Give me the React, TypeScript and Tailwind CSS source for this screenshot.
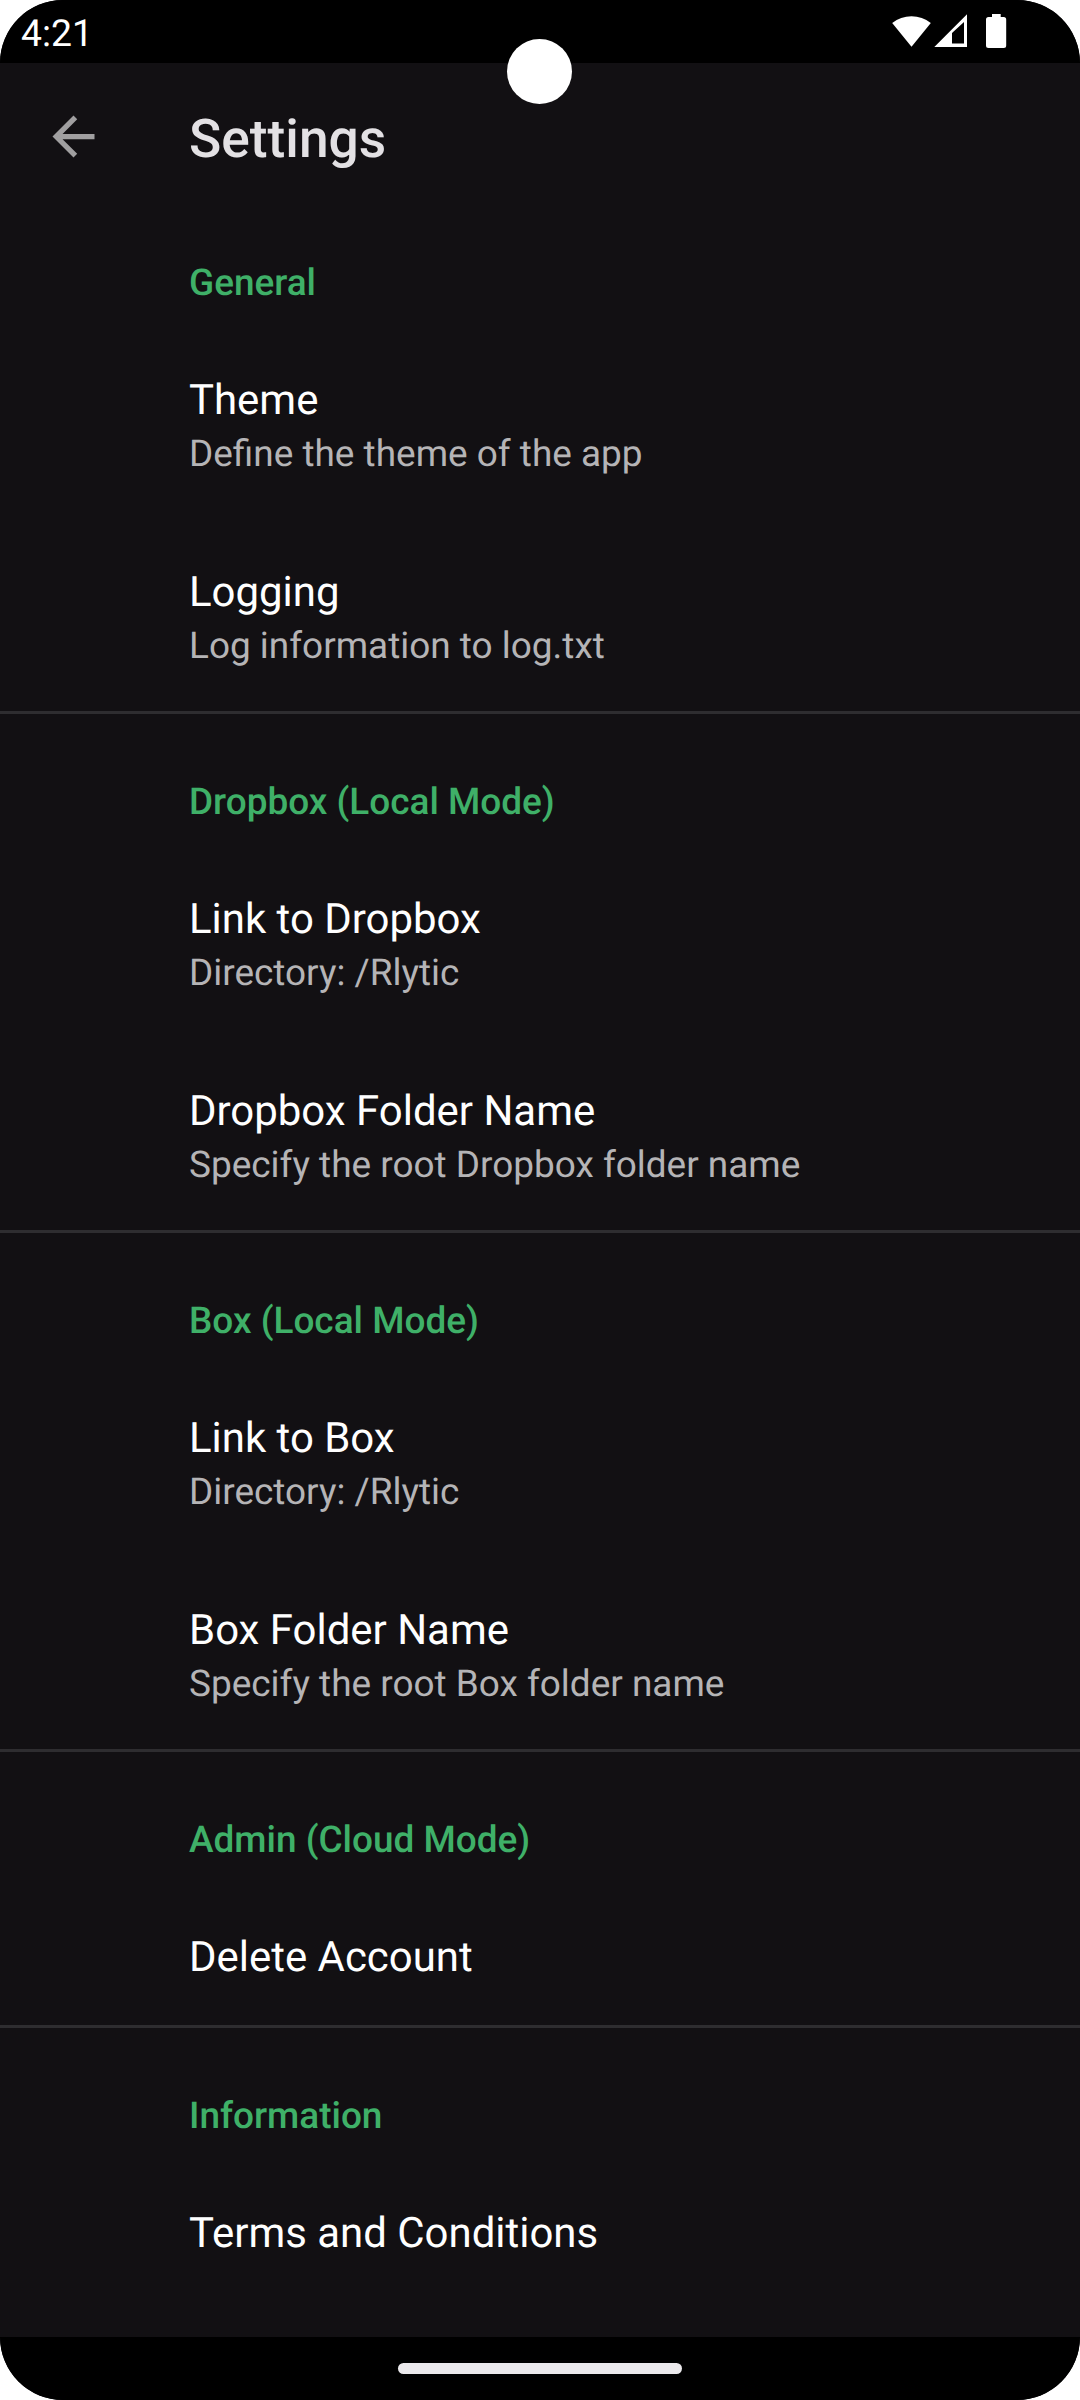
const sections = [
  {
    title: "General",
    items: [
      { title: "Theme", summary: "Define the theme of the app" },
      { title: "Logging", summary: "Log information to log.txt" },
    ],
  },
  {
    title: "Dropbox (Local Mode)",
    items: [
      { title: "Link to Dropbox", summary: "Directory: /Rlytic" },
      { title: "Dropbox Folder Name", summary: "Specify the root Dropbox folder name" },
    ],
  },
  {
    title: "Box (Local Mode)",
    items: [
      { title: "Link to Box", summary: "Directory: /Rlytic" },
      { title: "Box Folder Name", summary: "Specify the root Box folder name" },
    ],
  },
  { title: "Admin (Cloud Mode)", items: [{ title: "Delete Account", summary: "" }] },
  { title: "Information", items: [{ title: "Terms and Conditions", summary: "" }] },
];

function StatusBar() {
  return (
    <header className="flex h-[63px] shrink-0 items-start justify-between bg-black pl-[21px] pr-[72px] pt-3">
      <span className="text-[37.3px] leading-[44px] text-white">4:21</span>
      <svg width="118" height="40" viewBox="890 12 118 40" fill="#fff">
        {/* wifi */}
        <path d="M911.5 46.7 892.2 23a31 31 0 0 1 38.6 0Z" />
        {/* signal */}
        <path fillRule="evenodd" d="M934.3 47H967V14.2ZM952 33v10.6h12V22Z" />
        {/* battery */}
        <path d="M992 14h8.700v3h3q2.500 0 2.500 2.500v26q0 2.500-2.500 2.500h-15.200q-2.500 0-2.500-2.500v-26q0-2.500 2.500-2.500h3.500Z" />
      </svg>
    </header>
  );
}

export default function App() {
  return (
    <div className="h-[2400px] w-[1080px] bg-white font-['Roboto',sans-serif] [text-rendering:geometricPrecision]">
      <div className="relative flex h-full flex-col overflow-hidden rounded-[63px] bg-[#121013]">
        <StatusBar />
        {/* camera cutout */}
        <div className="absolute left-[507px] top-[39px] size-[65px] rounded-full bg-white" />
        <div className="flex h-[132px] shrink-0 items-start">
          <svg className="ml-[42px] mt-[42px] size-[63px]" viewBox="0 0 24 24" fill="#a09fa0">
            <path d="M20 11H7.83l5.59-5.59L12 4l-8 8 8 8 1.41-1.41L7.83 13H20v-2z" />
          </svg>
          <h1 className="ml-[84px] mt-[46px] text-[53.3px] font-medium leading-[62px] text-[#e3e1e4]">Settings</h1>
        </div>
        <main className="flex-1 overflow-hidden">
          {sections.map((section) => (
            <section key={section.title} className="border-b-[3px] border-[#2e2d30] pl-[189px] last:border-0">
              <h2 className="pb-[22px] pt-[67px] text-[36.95px] font-medium leading-[43px] text-[#3fb068]">
                {section.title}
              </h2>
              {section.items.map((item) => (
                <div key={item.title} className="pb-10 pt-[46px]">
                  <h3 className="text-[41.95px] leading-[55px] text-white">{item.title}</h3>
                  {item.summary && (
                    <p className="-mb-0.5 text-[36.95px] leading-[53px] text-[#b5b4b6]">{item.summary}</p>
                  )}
                </div>
              ))}
            </section>
          ))}
        </main>
        <footer className="flex h-[63px] shrink-0 items-center justify-center bg-black">
          <div className="h-[11px] w-[284px] rounded-full bg-[#ebe9ec]" />
        </footer>
      </div>
    </div>
  );
}
